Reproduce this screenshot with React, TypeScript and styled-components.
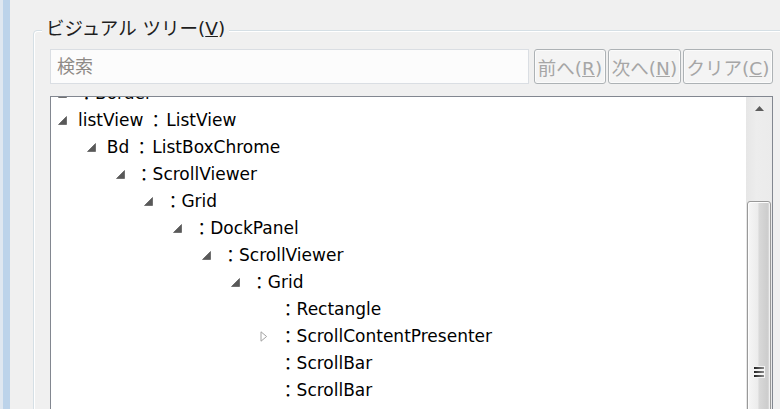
import React from "react";
import styled, { createGlobalStyle } from "styled-components";

const GlobalStyle = createGlobalStyle`
  html, body {
    margin: 0;
    padding: 0;
    background: #f0f0f0;
    overflow: hidden;
  }
  body {
    font-family: "DejaVu Sans", "Noto Sans CJK JP", sans-serif;
  }
`;

const Window = styled.div`
  display: flex;
  width: 780px;
  height: 409px;
  overflow: hidden;
  background: #f0f0f0;
`;

const Splitter = styled.div`
  flex: 0 0 10px;
  background: linear-gradient(
    to right,
    #dfe7f0 0,
    #dfe7f0 3px,
    #bcd3ea 3px,
    #bcd3ea 10px
  );
`;

const Main = styled.div`
  flex: 0 0 auto;
  padding: 17px 0 0 23px;
`;

const GroupBox = styled.fieldset`
  margin: 0;
  padding: 6px 16px 0 16px;
  width: 723px;
  min-width: 0;
  border: 1px solid #d5dfe5;
  border-radius: 4px;
  box-shadow: inset 1px 1px 0 #fff, 1px 1px 0 #fff;
`;

const Legend = styled.legend`
  margin-left: -8px;
  padding: 0 4px 3px 4px;
  background: #f0f0f0;
  font-family: "DejaVu Sans", "Noto Sans CJK JP", sans-serif;
  font-size: 18.5px;
  line-height: 23px;
  color: #1e1e1e;
`;

const SearchRow = styled.div`
  display: flex;
  gap: 2px;
  height: 35px;
`;

const SearchBox = styled.input`
  flex: 1;
  min-width: 0;
  margin: 0 3px 0 0;
  padding: 0 6px;
  border: 1px solid #dadee3;
  background: #fcfcfc;
  font-family: "DejaVu Sans", "Noto Sans CJK JP", sans-serif;
  font-size: 18px;
  color: #000;
  outline: none;

  &::placeholder {
    color: #8e8a86;
  }
`;

const ToolButton = styled.button<{ $width: number }>`
  flex: 0 0 ${(p) => p.$width}px;
  height: 35px;
  padding: 0;
  border: 1px solid #adb2b5;
  border-radius: 3px;
  background: #f4f4f4;
  box-shadow: inset 0 0 0 1px #fbfbfb;
  color: #a6a6a6;
  font-family: "DejaVu Sans", "Noto Sans CJK JP", sans-serif;
  font-size: 18.5px;
  white-space: nowrap;
`;

const Tree = styled.div`
  display: flex;
  margin-top: 12px;
  height: 330px;
  border: 1px solid #828790;
  background: #fff;
`;

const Viewport = styled.div`
  flex: 1;
  overflow: hidden;
  padding-left: 7px;
`;

// the tree is scrolled a little: the first row is mostly hidden
const Rows = styled.div`
  margin-top: -18px;
`;

const Row = styled.div<{ $level: number }>`
  display: flex;
  align-items: center;
  height: 27px;
  padding-left: ${(p) => p.$level * 28.8}px;
  font-size: 17px;
  color: #000;
  white-space: nowrap;
`;

const Expander = styled.span`
  flex: 0 0 20px;
  display: flex;
  align-items: center;
  height: 100%;
  padding-top: 2px;
  box-sizing: border-box;
`;

const Colon = styled.span<{ $spaced: boolean }>`
  font-family: "Noto Sans CJK JP", sans-serif;
  margin: ${(p) => (p.$spaced ? "0 2px 0 4px" : "0")};
`;

const ScrollBar = styled.div`
  flex: 0 0 26px;
  display: flex;
  flex-direction: column;
  background: linear-gradient(to right, #e6e6e6, #ededed 40%, #ebebeb);
`;

const ArrowButton = styled.div`
  flex: 0 0 23px;
  display: flex;
  align-items: center;
  justify-content: center;
  padding-left: 1px;
`;

const Track = styled.div<{ $offset: number }>`
  flex: 1;
  padding: ${(p) => p.$offset}px 1px 0 1px;
`;

const Thumb = styled.div`
  height: 340px;
  display: flex;
  align-items: center;
  justify-content: center;
  border: 1px solid #999;
  border-radius: 3px;
  background: linear-gradient(
    to right,
    #f6f6f6 0%,
    #ececec 45%,
    #d9d9d9 50%,
    #cdcdcd 88%,
    #e4e4e4 100%
  );
  box-shadow: inset 1px 1px 0 #fdfdfd, inset -1px 0 0 #f0f0f0;
`;

const Grip = styled.div`
  display: flex;
  flex-direction: column;
  gap: 2px;
  padding: 1px 1px;
  background: #f4f4f4;
`;

const GripLine = styled.div`
  width: 10px;
  height: 2px;
  background: linear-gradient(to right, #1f1f1f, #8a8a8a);
`;

type Node = {
  level: number;
  name: string;
  type: string;
  state: "open" | "closed" | "leaf";
};

const nodes: Node[] = [
  { level: 0, name: "", type: "Border", state: "open" },
  { level: 0, name: "listView", type: "ListView", state: "open" },
  { level: 1, name: "Bd", type: "ListBoxChrome", state: "open" },
  { level: 2, name: "", type: "ScrollViewer", state: "open" },
  { level: 3, name: "", type: "Grid", state: "open" },
  { level: 4, name: "", type: "DockPanel", state: "open" },
  { level: 5, name: "", type: "ScrollViewer", state: "open" },
  { level: 6, name: "", type: "Grid", state: "open" },
  { level: 7, name: "", type: "Rectangle", state: "leaf" },
  { level: 7, name: "", type: "ScrollContentPresenter", state: "closed" },
  { level: 7, name: "", type: "ScrollBar", state: "leaf" },
  { level: 7, name: "", type: "ScrollBar", state: "leaf" },
  { level: 5, name: "", type: "ScrollBar", state: "leaf" },
];

function ExpanderIcon({ state }: { state: Node["state"] }) {
  if (state === "open") {
    return (
      <svg width="9" height="9" viewBox="0 0 9 9">
        <path d="M8.5 0.5 L8.5 8.5 L0.5 8.5 Z" fill="#595959" stroke="#4a4a4a" strokeWidth="0.6" />
      </svg>
    );
  }
  if (state === "closed") {
    return (
      <svg width="8" height="11" viewBox="0 0 8 11">
        <path d="M1 0.8 L6.6 5.5 L1 10.2 Z" fill="#fff" stroke="#a2a2a2" strokeWidth="1" />
      </svg>
    );
  }
  return null;
}

export default function App() {
  return (
    <>
      <GlobalStyle />
      <Window>
        <Splitter />
        <Main>
          <GroupBox>
            <Legend>
              ビジュアル ツリー(<u>V</u>)
            </Legend>
            <SearchRow>
              <SearchBox placeholder="検索" />
              <ToolButton $width={72} disabled>
                前へ(<u>R</u>)
              </ToolButton>
              <ToolButton $width={73} disabled>
                次へ(<u>N</u>)
              </ToolButton>
              <ToolButton $width={90} disabled>
                クリア(<u>C</u>)
              </ToolButton>
            </SearchRow>
            <Tree>
              <Viewport>
                <Rows>
                  {nodes.map((n, i) => (
                    <Row key={i} $level={n.level}>
                      <Expander>
                        <ExpanderIcon state={n.state} />
                      </Expander>
                      {n.name && <span>{n.name}</span>}
                      <Colon $spaced={n.name !== ""}>：</Colon>
                      <span>{n.type}</span>
                    </Row>
                  ))}
                </Rows>
              </Viewport>
              <ScrollBar>
                <ArrowButton>
                  <svg width="9" height="5" viewBox="0 0 9 5">
                    <path d="M0 5 L4.5 0 L9 5 Z" fill="#5c5c5c" />
                  </svg>
                </ArrowButton>
                <Track $offset={81}>
                  <Thumb>
                    <Grip>
                      <GripLine />
                      <GripLine />
                      <GripLine />
                    </Grip>
                  </Thumb>
                </Track>
              </ScrollBar>
            </Tree>
          </GroupBox>
        </Main>
      </Window>
    </>
  );
}
